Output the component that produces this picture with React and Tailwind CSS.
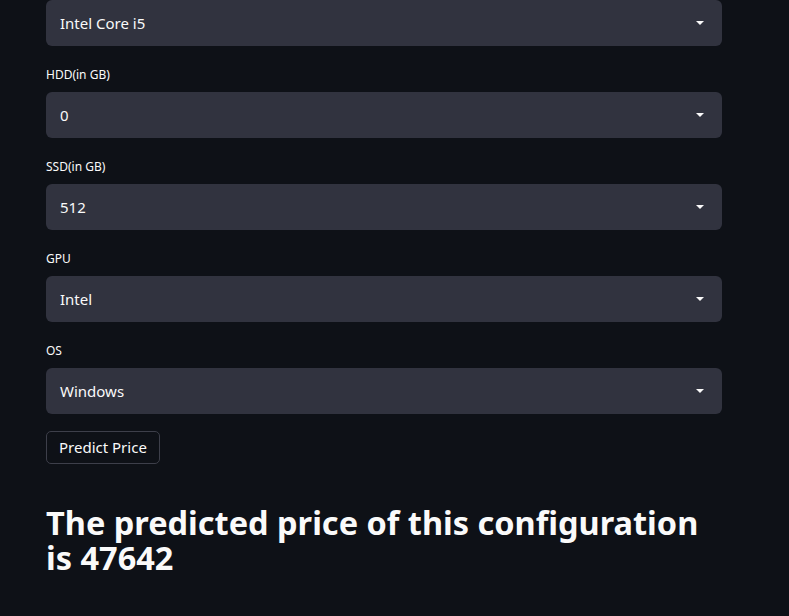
import React from "react";

function Caret() {
  return (
    <svg width="10" height="6" viewBox="0 0 10 6" className="shrink-0">
      <path d="M1 1 L9 1 L5 5 Z" fill="#fafafa" />
    </svg>
  );
}

function Select({ value }) {
  return (
    <div className="flex h-[46px] items-center justify-between rounded-md bg-[#31333f] pl-[14px] pr-[17px] text-[15px] text-[#fafafa]">
      <span>{value}</span>
      <Caret />
    </div>
  );
}

function Field({ label, value }) {
  return (
    <div className="flex flex-col">
      <div className="flex h-[46px] items-center pt-[11px] text-[12px] text-[#fafafa]">{label}</div>
      <Select value={value} />
    </div>
  );
}

export default function App() {
  return (
    <div className="min-h-[616px] w-full bg-[#0e1117] font-['Noto_Sans',sans-serif]">
      <div className="ml-[46px] w-[676px] flex flex-col">
        <Select value="Intel Core i5" />
        <Field label="HDD(in GB)" value="0" />
        <Field label="SSD(in GB)" value="512" />
        <Field label="GPU" value="Intel" />
        <Field label="OS" value="Windows" />
        <div className="mt-[17px]">
          <button className="h-[33px] rounded-[5px] border border-[#3d3f4a] bg-[#0e1117] px-[12px] text-[15px] text-[#fafafa]">
            Predict Price
          </button>
        </div>
        <h2 className="mt-[41px] text-[32.5px] font-bold leading-[35px] text-[#fafafa]">
          The predicted price of this configuration is 47642
        </h2>
      </div>
    </div>
  );
}
